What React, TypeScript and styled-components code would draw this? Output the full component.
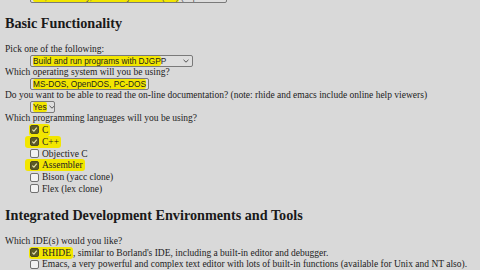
import React from 'react';
import styled, { createGlobalStyle } from 'styled-components';

const GlobalStyle = createGlobalStyle`
    html, body {
        margin: 0;
        padding: 0;
        background: #d9d9d9;
        overflow: hidden;
    }
`;

const Page = styled.div`
    margin-top: -10px;
    padding: 0 5px;
    font-family: "Liberation Serif", "Times New Roman", serif;
    font-size: 9.5px;
    line-height: 12px;
    color: #222;
    width: 470px;
`;

const Heading = styled.h2`
    margin: 12px 0;
    font-size: 14.2px;
    line-height: 17px;
    font-weight: bold;
    color: #1a1a1a;
`;

const Question = styled.div`
    height: 11px;
    line-height: 11px;
    white-space: nowrap;
`;

const Indent = styled.div`
    padding-left: 25px;
`;

const SelectBox = styled.div<{ $width: number }>`
    display: flex;
    align-items: center;
    justify-content: space-between;
    box-sizing: border-box;
    width: ${(p) => p.$width}px;
    height: 12px;
    padding: 0 3px 0 2px;
    border: 1px solid #7a7a7a;
    border-radius: 2px;
    background: #dedede;
    font-family: "Liberation Sans", Arial, sans-serif;
    font-size: 8.3px;
    line-height: 10px;
    color: #1e1e1e;
    white-space: nowrap;
    overflow: hidden;
`;

const Mark = styled.span`
    background: #f2e600;
    border-radius: 2px;
`;

const Chevron = styled.svg`
    flex: none;
    width: 6px;
    height: 4px;
    margin-left: 2px;
`;

const CheckRow = styled.div<{ $indent?: number }>`
    display: flex;
    align-items: center;
    height: 11.8px;
    padding-left: ${(p) => p.$indent ?? 25}px;
    white-space: nowrap;
`;

const Hilite = styled.span<{ $lead?: number }>`
    display: inline-flex;
    align-items: center;
    gap: 3px;
    padding: 0 2px 0 ${(p) => p.$lead ?? 0}px;
    background: #f2e600;
    border-radius: 3px;
`;

const Box = styled.span<{ $checked?: boolean }>`
    display: inline-flex;
    align-items: center;
    justify-content: center;
    box-sizing: border-box;
    width: 9px;
    height: 9px;
    margin-right: 3px;
    border: 1px solid ${(p) => (p.$checked ? '#4d4b22' : '#707070')};
    border-radius: 2px;
    background: ${(p) => (p.$checked ? '#5c5a26' : '#f2f2f2')};

    ${Hilite} & {
        margin-right: 0;
    }
`;

const Label = styled.span``;

const TopSelect = styled(SelectBox)`
    margin-left: 25px;
    height: 13px;
    color: #555;
`;

const ChevronIcon = () => (
    <Chevron viewBox="0 0 6 4">
        <path d="M0.5 0.8 L3 3.2 L5.5 0.8" fill="none" stroke="#444" strokeWidth="0.9" />
    </Chevron>
);

const Tick = () => (
    <svg width="7" height="7" viewBox="0 0 7 7">
        <path d="M1.3 3.7 L2.9 5.2 L5.8 1.6" fill="none" stroke="#e8e4b0" strokeWidth="1.1" />
    </svg>
);

const Select = ({ width, children }: { width: number; children: React.ReactNode }) => (
    <Indent>
        <SelectBox $width={width}>
            {children}
            <ChevronIcon />
        </SelectBox>
    </Indent>
);

interface CheckProps {
    checked?: boolean;
    marked?: boolean;
    lead?: number;
    children: React.ReactNode;
}

const Check = ({ checked, marked, lead = 0, children }: CheckProps) => {
    const tick = checked ? <Tick /> : null;

    if (marked) {
        return (
            <CheckRow $indent={25 - lead}>
                <Hilite $lead={lead}>
                    <Box $checked={checked}>{tick}</Box>
                    <Label>{children}</Label>
                </Hilite>
            </CheckRow>
        );
    }

    return (
        <CheckRow>
            <Box $checked={checked}>{tick}</Box>
            <Label>{children}</Label>
        </CheckRow>
    );
};

const App = () => {
    return (
        <>
            <GlobalStyle />
            <Page>
                <TopSelect $width={197}>
                    <span><Mark>UK, Canterbury, University of Kent (UK)</Mark> (http://www.mirrorservice.org/)</span>
                </TopSelect>

                <Heading>Basic Functionality</Heading>

                <Question>Pick one of the following:</Question>
                <Select width={163}>
                    <span><Mark>Build and run programs with DJGP</Mark>P</span>
                </Select>

                <Question>Which operating system will you be using?</Question>
                <Select width={119}>
                    <span><Mark>MS-DOS, OpenDOS, PC-DOS</Mark></span>
                </Select>

                <Question>
                    Do you want to be able to read the on-line documentation? (note: rhide and emacs include online help viewers)
                </Question>
                <Select width={25}>
                    <span><Mark>Yes</Mark></span>
                </Select>

                <Question>Which programming languages will you be using?</Question>
                <Check checked marked lead={1}>C</Check>
                <Check checked marked lead={5}>C++</Check>
                <Check>Objective C</Check>
                <Check checked marked lead={5}>Assembler</Check>
                <Check>Bison (yacc clone)</Check>
                <Check>Flex (lex clone)</Check>

                <Heading>Integrated Development Environments and Tools</Heading>

                <Question>Which IDE(s) would you like?</Question>
                <CheckRow $indent={24}>
                    <Hilite $lead={1}>
                        <Box $checked><Tick /></Box>
                        <Label>RHIDE</Label>
                    </Hilite>
                    <Label>, similar to Borland's IDE, including a built-in editor and debugger.</Label>
                </CheckRow>
                <Check>
                    Emacs, a very powerful and complex text editor with lots of built-in functions (available for Unix and NT also).
                </Check>
                <Check>Other</Check>
            </Page>
        </>
    );
};

export default App;
